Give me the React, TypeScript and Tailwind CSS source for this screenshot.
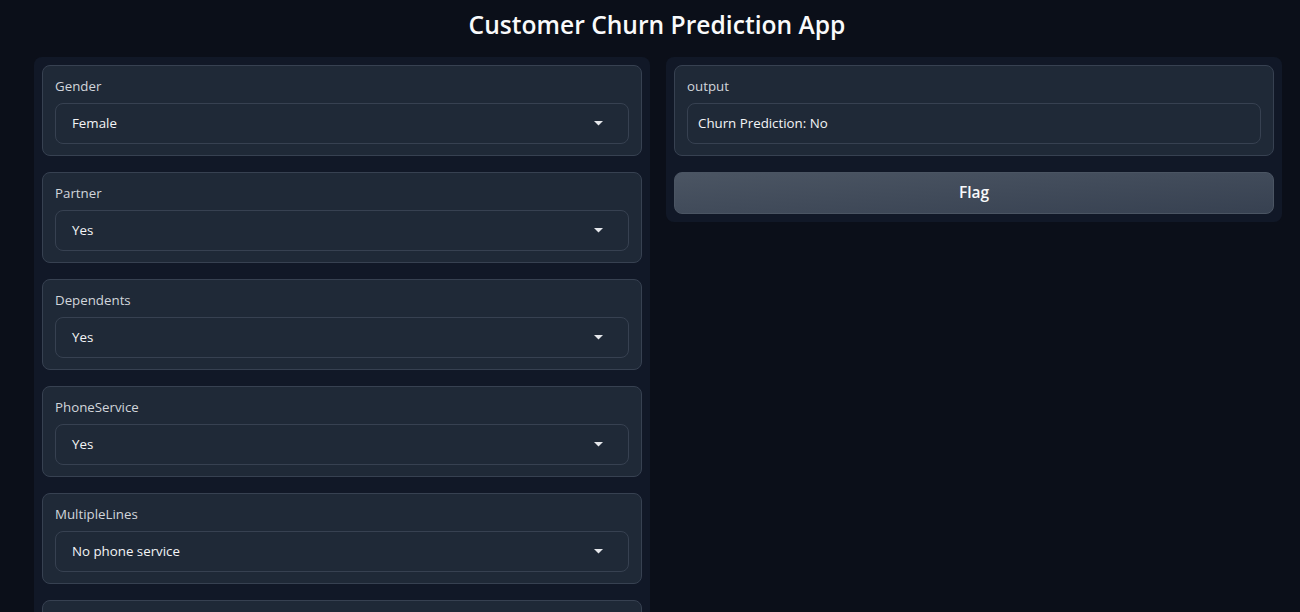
const fields = [
  { label: "Gender", value: "Female" },
  { label: "Partner", value: "Yes" },
  { label: "Dependents", value: "Yes" },
  { label: "PhoneService", value: "Yes" },
  { label: "MultipleLines", value: "No phone service" },
  { label: "InternetService", value: "DSL" },
];

const Caret = () => (
  <svg width="9" height="5" viewBox="0 0 9 5" className="fill-gray-200">
    <path d="M0 0 L9 0 L4.5 4.5 Z" />
  </svg>
);

const Dropdown = ({ label, value }: { label: string; value: string }) => (
  <div className="rounded-[8px] border border-[#374151] bg-[#1f2937] px-3 pt-[11px] pb-[11px]">
    <div className="text-[13.3px] leading-[18px] text-[#d1d5db]">{label}</div>
    <div className="mt-[8px] flex h-[41px] items-center justify-between rounded-[8px] border border-[#374151] pl-4 pr-[25px]">
      <span className="pt-[1px] text-[13.3px] text-[#f3f4f6]">{value}</span>
      <Caret />
    </div>
  </div>
);

export default function App() {
  return (
    <div
      className="h-[612px] overflow-hidden bg-[#0b0f19] text-white"
      style={{ fontFamily: '"Open Sans", "Noto Sans", sans-serif' }}
    >
      <h1 className="pt-[9px] pb-[16px] pl-[14px] text-center text-[24.6px] leading-[32px] font-semibold text-[#f9fafb]">
        Customer Churn Prediction App
      </h1>
      <div className="flex items-start gap-4 pl-[34px] pr-[18px]">
        <div className="flex flex-1 flex-col gap-4 rounded-[8px] bg-[#111827] p-2">
          {fields.map((f) => (
            <Dropdown key={f.label} label={f.label} value={f.value} />
          ))}
        </div>
        <div className="flex flex-1 flex-col gap-4 rounded-[8px] bg-[#111827] p-2">
          <div className="rounded-[8px] border border-[#374151] bg-[#1f2937] px-3 pt-[11px] pb-[11px]">
            <div className="text-[13.3px] leading-[18px] text-[#d1d5db]">output</div>
            <div className="mt-[8px] flex h-[41px] items-center rounded-[8px] border border-[#374151] px-[10px]">
              <span className="pt-[1px] text-[13.3px] text-[#f3f4f6]">Churn Prediction: No</span>
            </div>
          </div>
          <button className="h-[42px] rounded-[8px] border border-[#4b5563] bg-gradient-to-br from-[#4b5563] to-[#374151] text-[15.5px] font-semibold text-[#f9fafb]">
            Flag
          </button>
        </div>
      </div>
    </div>
  );
}
